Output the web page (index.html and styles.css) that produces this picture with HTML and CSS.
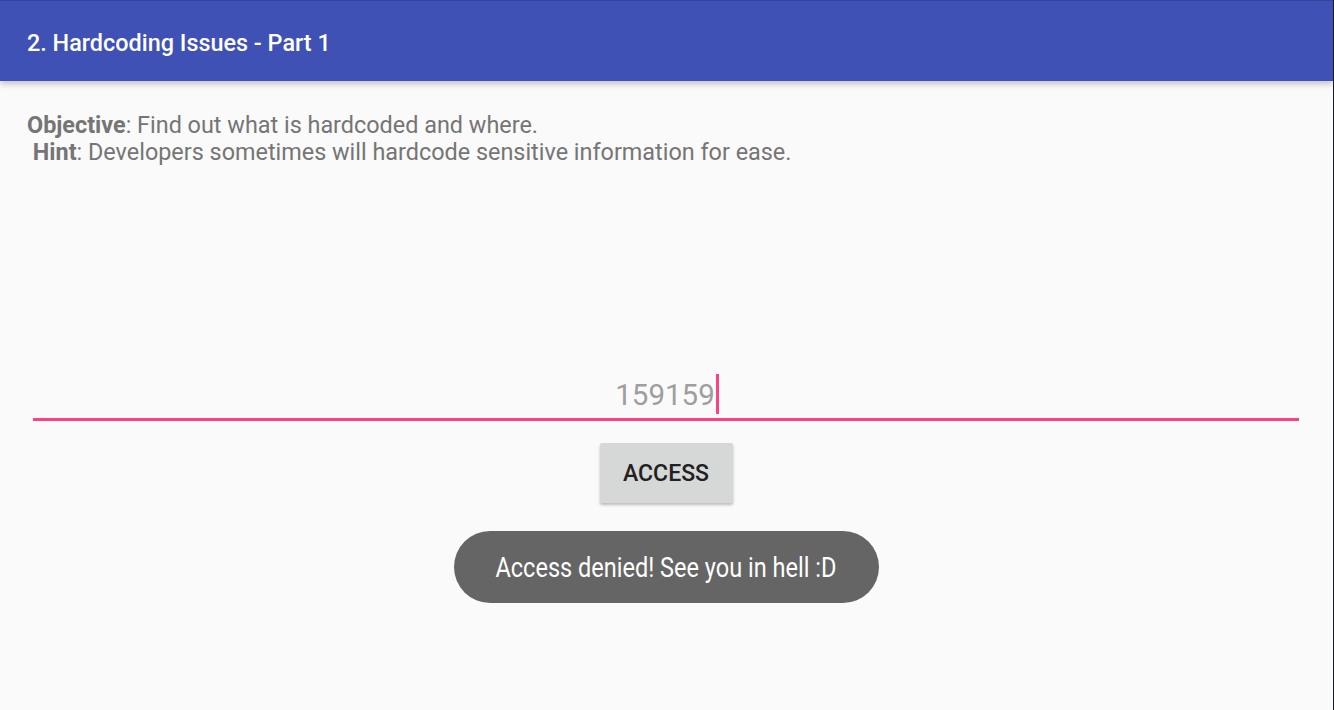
FILE: index.html
```html
<!DOCTYPE html>
<html>
<head>
<title>2. Hardcoding Issues - Part 1</title>
<meta charset="utf-8">
<link rel="stylesheet" href="styles.css">
</head>
<body>

<div class="appbar">
    <h1 class="apptitle">2. Hardcoding Issues - Part 1</h1>
</div>

<div class="content">
    <p class="intro">
        <b>Objective</b>: Find out what is hardcoded and where.<br>
        &nbsp;<b>Hint</b>: Developers sometimes will hardcode sensitive information for ease.
    </p>

    <div class="field">
        <span class="fieldtext">159159<span class="cursor"></span></span>
    </div>

    <div class="btnrow">
        <button class="accessbtn">ACCESS</button>
    </div>

    <div class="toastrow">
        <div class="toast"><span class="toasttext">Access denied! See you in hell :D</span></div>
    </div>
</div>

</body>
</html>
```

FILE: styles.css
```css
html, body {
  margin: 0;
  padding: 0;
  height: 100%;
}

body {
  background-color: #fafafa;
  font-family: Roboto, "Noto Sans", sans-serif;
  border-right: 1px solid #1a1a2e;
  box-sizing: border-box;
  overflow: hidden;
}

.appbar {
  background-color: #3f51b5;
  border-top: 1px solid #34449c;
  height: 81px;
  box-sizing: border-box;
  display: flex;
  align-items: center;
  padding-left: 27px;
  padding-top: 3px;
  box-shadow: 0 3px 6px rgba(0, 0, 0, 0.22);
  position: relative;
}

.apptitle {
  margin: 0;
  color: #ffffff;
  font-size: 23.4px;
  font-weight: 500;
}

.content {
  padding: 0 34px 0 33px;
}

.intro {
  margin: 31px 0 0 -6px;
  font-size: 23.4px;
  line-height: 27px;
  color: #757575;
}

.intro b {
  font-weight: 700;
}

.field {
  margin-top: 208px;
  border-bottom: 3px solid #ff4081;
  text-align: center;
  height: 47px;
  box-sizing: border-box;
}

.fieldtext {
  font-size: 29.5px;
  color: #9e9e9e;
  line-height: 28px;
  margin-left: 2px;
}

.cursor {
  display: inline-block;
  width: 3px;
  height: 40px;
  background-color: #ff4081;
  vertical-align: -9px;
  margin-left: 1px;
}

.btnrow {
  display: flex;
  justify-content: center;
  margin-top: 22px;
}

.accessbtn {
  width: 133px;
  height: 60px;
  border: none;
  border-radius: 2px;
  background-color: #d6d7d7;
  color: #212121;
  font-family: Roboto, sans-serif;
  font-weight: 500;
  font-size: 23px;
  box-shadow: 0 2px 3px rgba(0, 0, 0, 0.25);
}

.toastrow {
  display: flex;
  justify-content: center;
  margin-top: 28px;
}

.toast {
  width: 425px;
  height: 72px;
  border-radius: 36px;
  background-color: #656565;
  display: flex;
  align-items: center;
  justify-content: center;
}

.toasttext {
  color: #ffffff;
  font-size: 28px;
  display: inline-block;
  transform: scaleX(0.84);
  white-space: nowrap;
}
```
